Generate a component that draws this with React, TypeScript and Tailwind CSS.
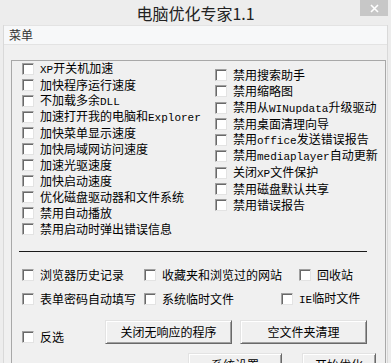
import type { ReactNode } from 'react'

// ============ data ============

const leftItems = [
  'XP开关机加速',
  '加快程序运行速度',
  '不加载多余DLL',
  '加速打开我的电脑和Explorer',
  '加快菜单显示速度',
  '加快局域网访问速度',
  '加速光驱速度',
  '加快启动速度',
  '优化磁盘驱动器和文件系统',
  '禁用自动播放',
  '禁用启动时弹出错误信息',
]

const rightItems = [
  '禁用搜索助手',
  '禁用缩略图',
  '禁用从WINupdata升级驱动',
  '禁用桌面清理向导',
  '禁用office发送错误报告',
  '禁用mediaplayer自动更新',
  '关闭XP文件保护',
  '禁用磁盘默认共享',
  '禁用错误报告',
]

// latin runs get a narrow mono face, like the old bitmap font
function Label({ text }: { text: string }) {
  const parts = text.split(/([A-Za-z]+)/)
  return (
    <span className="text-[12px] text-black leading-none">
      {parts.map((p, i) =>
        /[A-Za-z]/.test(p) ? (
          <span key={i} className="font-['Liberation_Mono',monospace] text-[11px]">
            {p}
          </span>
        ) : (
          p
        )
      )}
    </span>
  )
}

function Box() {
  return (
    <span className="w-[12px] h-[12px] shrink-0 bg-white border border-t-[#a0a0a0] border-l-[#a0a0a0] border-r-[#e3e3e3] border-b-[#e3e3e3] shadow-[inset_1px_1px_0_#696969]" />
  )
}

function Check({ text, className = '' }: { text: string; className?: string }) {
  return (
    <div className={`flex items-center gap-[6px] whitespace-nowrap ${className}`}>
      <Box />
      <Label text={text} />
    </div>
  )
}

function Button({ children, className = '' }: { children: ReactNode; className?: string }) {
  return (
    <div
      className={`h-[24px] flex items-center justify-center text-[12px] text-black bg-[#f0f0f0] border border-t-[#e3e3e3] border-l-[#e3e3e3] border-r-[#696969] border-b-[#696969] shadow-[inset_1px_1px_0_#ffffff,inset_-1px_-1px_0_#a0a0a0] ${className}`}
    >
      {children}
    </div>
  )
}

export default function App() {
  return (
    <div className="w-[391px] h-[363px] overflow-hidden bg-[#ededed] flex flex-col font-['Noto_Sans_CJK_SC',sans-serif]">
      {/* title bar */}
      <div className="relative h-[25px] shrink-0 flex items-center justify-center text-[16px] text-[#222]">
        电脑优化专家1.1
        <div className="absolute right-[3px] top-0 w-[28px] h-[16px] bg-[#c7c7c7] flex items-center justify-center">
          <svg width="9" height="9" viewBox="0 0 9 9">
            <path d="M1 1L8 8M8 1L1 8" stroke="#fff" strokeWidth="1.6" />
          </svg>
        </div>
      </div>

      <div className="flex-1 mx-[3px] border-x border-[#d9d9d9] bg-[#f0f0f0] flex flex-col">
        {/* menu */}
        <div className="h-[20px] shrink-0 bg-[#f7f8f9] border-y border-[#e3e3e3] flex items-center pl-[5px] text-[12px] text-[#333]">
          菜单
        </div>

        {/* group */}
        <div className="mt-[15px] ml-[7px] mr-[1px] flex-1 border-t border-x border-[#a8a8a8]">
          <div className="flex pl-[10px]">
            <div className="w-[193px] flex flex-col">
              {leftItems.map((t) => (
                <Check key={t} text={t} className="h-[16px]" />
              ))}
            </div>
            <div className="pt-[6px] flex flex-col">
              {rightItems.map((t) => (
                <Check key={t} text={t} className="h-[16.25px]" />
              ))}
            </div>
          </div>

          <div className="mt-[14px] ml-[7px] w-[348px] h-px bg-[#1a1a1a]" />

          <div className="pl-[10px]">
            <div className="mt-[15px] flex h-[16px]">
              <Check text="浏览器历史记录" className="w-[122px]" />
              <Check text="收藏夹和浏览过的网站" className="w-[155px]" />
              <Check text="回收站" />
            </div>
            <div className="mt-[8px] flex h-[16px]">
              <Check text="表单密码自动填写" className="w-[122px]" />
              <Check text="系统临时文件" className="w-[137px]" />
              <Check text="IE临时文件" />
            </div>
            <div className="mt-[13px] flex items-start">
              <Check text="反选" className="w-[83px] h-[16px] mt-[9px]" />
              <Button className="w-[127px]">关闭无响应的程序</Button>
              <Button className="w-[127px] ml-[8px]">空文件夹清理</Button>
            </div>
            <div className="mt-[8px] flex">
              <Button className="w-[94px] ml-[166px]">系统设置</Button>
              <Button className="w-[74px] ml-[20px]">开始优化</Button>
            </div>
          </div>
        </div>
      </div>
    </div>
  )
}
